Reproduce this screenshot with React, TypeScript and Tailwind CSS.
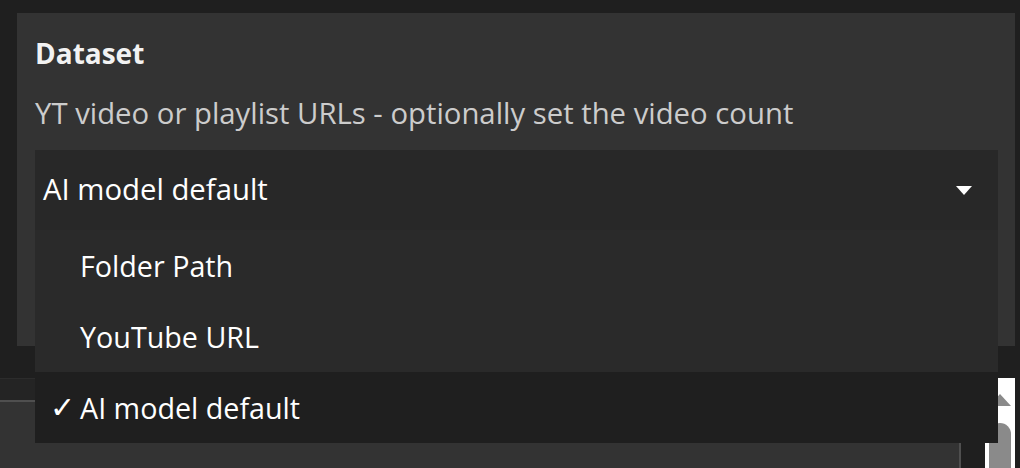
import React from "react";

const options = ["Folder Path", "YouTube URL", "AI model default"];

export default function App() {
  const selected = "AI model default";

  return (
    <div
      className="relative w-[1020px] h-[468px] overflow-hidden bg-[#1f1f1f] text-white"
      style={{ fontFamily: '"Open Sans", "Noto Sans", "DejaVu Sans", sans-serif' }}
    >
      <div className="pt-[13px] pl-[17px] pr-[5px]">
        <div className="h-[333px] bg-[#333333] pl-[18px] pr-[17px] pt-[22px]">
          <h2 className="text-[28px] leading-[36px] font-bold text-[#f2f2f2]">Dataset</h2>
          <p className="mt-[24px] text-[29.3px] leading-[36px] text-[#cccccc] whitespace-nowrap">
            YT video or playlist URLs - optionally set the video count
          </p>

          {/* select + open list */}
          <div className="relative mt-[19px]">
            <div className="flex h-[80px] items-center justify-between bg-[#282828] pl-[8px] pr-[26px]">
              <span className="text-[29.3px] text-white">{selected}</span>
              <span className="h-0 w-0 border-x-[8px] border-t-[9px] border-x-transparent border-t-white" />
            </div>
            <ul className="absolute left-0 right-0 top-[80px] z-10 bg-[#2a2a2a]">
              {options.map((o) => (
                <li
                  key={o}
                  className={
                    "flex h-[71px] items-center text-[28.7px] " +
                    (o === selected ? "bg-[#1f1f1f]" : "")
                  }
                >
                  <span
                    className="w-[45px] pl-[15px] text-[30px]"
                    style={{ fontFamily: '"DejaVu Sans", sans-serif' }}
                  >
                    {o === selected ? "✓" : ""}
                  </span>
                  {o}
                </li>
              ))}
            </ul>
          </div>
        </div>
      </div>

      {/* content peeking out under the panel */}
      <div className="mt-[32px] flex">
        <div className="w-[961px]">
          <div className="h-[22px] border-t border-[#2c2c2c] bg-[#242424]" />
          <div className="h-[68px] border-t-2 border-r-2 border-[#4f4f4f] bg-[#333333]" />
        </div>
        <div className="ml-[24px] flex h-[92px] w-[30px] flex-col items-center bg-white pt-[16px]">
          <span className="h-0 w-0 border-x-[11px] border-b-[12px] border-x-transparent border-b-[#8a8a8a]" />
          <span className="mt-[17px] h-[60px] w-[22px] rounded-t-[11px] bg-[#8a8a8a]" />
        </div>
      </div>
    </div>
  );
}
